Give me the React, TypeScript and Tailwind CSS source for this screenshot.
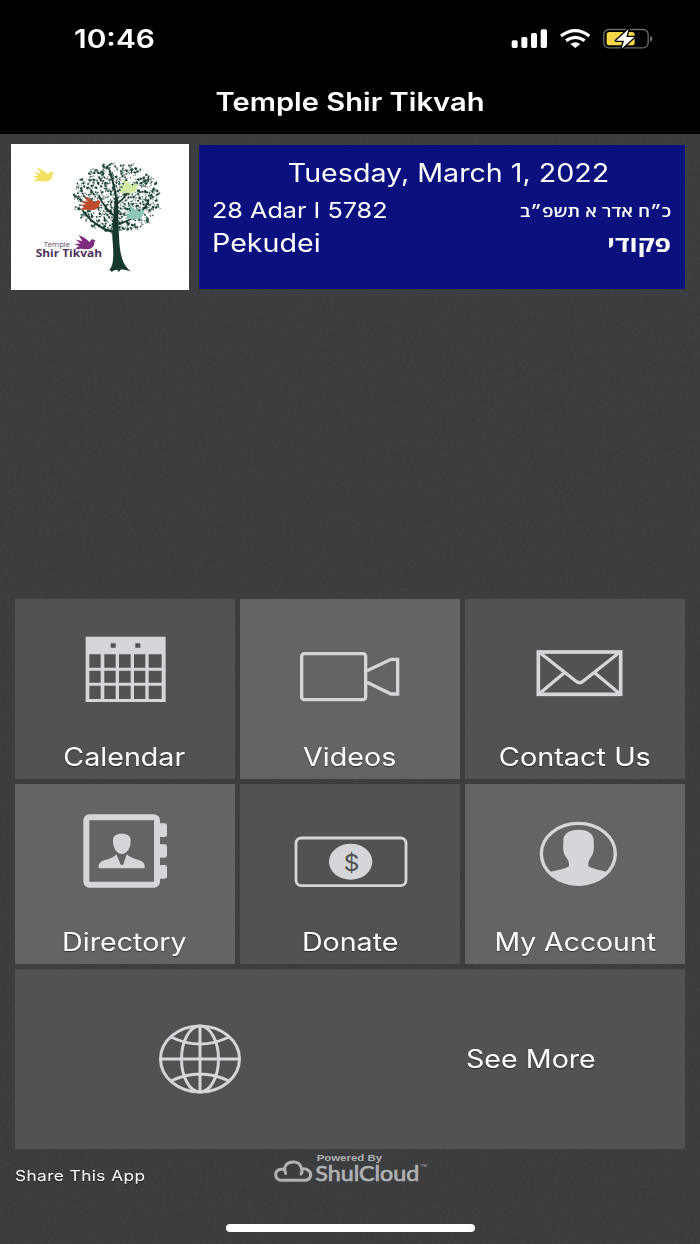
import type { ReactNode } from 'react'

const FG = '#d5d6da'

type TileProps = {
    label: string
    viewBox: string
    light?: boolean
    labelClass: string
    children: ReactNode
}

// Small deterministic generator, keeps the leaves in the same place on every render
function makeLeaves(count: number) {
    let seed = 17
    const next = () => {
        seed = (seed * 16807) % 2147483647
        return seed / 2147483647
    }
    return Array.from({ length: count }, (_, i) => {
        const angle = i * 2.39996 + next() * 0.3
        const dist = Math.sqrt((i + next()) / count)
        return {
            x: 350 + Math.cos(angle) * dist * 130,
            y: 187 + Math.sin(angle) * dist * 105,
            r: 1.2 + next() * 3.4,
            tilt: next() * 180,
            stem: next() > 0.4,
        }
    })
}

const leaves = makeLeaves(440)

function Bird({ x, y, color }: { x: number; y: number; color: string }) {
    return (
        <path
            transform={`translate(${x} ${y})`}
            fill={color}
            d="M13 0L29 8L40 16C44 20 45 22 47 21C48 13 57 11 60 16L64 17L60 22C60 34 50 44 38 43C30 44 22 40 14 43L2 41L15 34L0 27L18 26L4 14L24 19Z"
        />
    )
}

function Logo() {
    return (
        <svg viewBox="33 25 534 440" preserveAspectRatio="none" className="h-[146px] w-[178px] shrink-0 bg-white">
            <g fill="#1d443b" stroke="#1d443b">
                {leaves.map((leaf, i) => (
                    <g key={i} transform={`translate(${leaf.x} ${leaf.y}) rotate(${leaf.tilt})`}>
                        <ellipse rx={leaf.r} ry={leaf.r * 0.8} strokeWidth="0.5" />
                        {leaf.stem && <path d={`M${leaf.r} 0v-9l3 2`} fill="none" strokeWidth="1.3" />}
                    </g>
                ))}
            </g>
            <g fill="none" stroke="#17382f" strokeLinecap="round">
                <path d="M345 292C318 286 278 267 249 227" strokeWidth="6" />
                <path d="M349 248C326 226 307 209 297 180" strokeWidth="5" />
                <path d="M350 235C354 190 340 145 329 105" strokeWidth="6" />
                <path d="M350 207C365 193 378 184 384 168" strokeWidth="5" />
                <path d="M350 268C391 257 431 232 445 198" strokeWidth="5" />
            </g>
            <path fill="#17382f" d="M345 190L354 190C355 235 355 278 358 320C361 366 372 396 394 409C379 405 370 403 363 403L356 411L352 404C346 404 340 406 335 411L332 406L327 405C340 394 342 366 338 320C334 286 341 240 345 190Z" />
            <Bird x={98} y={95} color="#f3df61" />
            <Bird x={239} y={181} color="#bf4a2c" />
            <Bird x={352} y={130} color="#d2e9a2" />
            <Bird x={371} y={209} color="#8cc7ba" />
            <Bird x={223} y={299} color="#7e2d80" />
            <text x="131" y="334" textLength="79" lengthAdjust="spacingAndGlyphs" fontFamily="Open Sans, sans-serif" fontSize="20" fill="#574763">Temple</text>
            <text x="107" y="367" textLength="199" lengthAdjust="spacingAndGlyphs" fontFamily="Open Sans, sans-serif" fontSize="33" fontWeight="700" fill="#4c315c">Shir Tikvah</text>
        </svg>
    )
}

function StatusIcons() {
    return (
        <svg viewBox="60 50 435 70" className="mt-px h-[23.33px] w-[145px]">
            <g fill="#fff">
                <rect x="65" y="90" width="18" height="23" rx="5" />
                <rect x="94" y="80" width="18" height="33" rx="5" />
                <rect x="123" y="68" width="18" height="45" rx="5" />
                <rect x="152" y="57" width="19" height="56" rx="5" />
                <path d="M241 101Q256 91 271 101L256 113Z" />
            </g>
            <g fill="none" stroke="#fff" strokeWidth="10">
                <path d="M213 77Q256 45 298 77" />
                <path d="M228 91Q256 71 284 91" />
            </g>
            <rect x="341.500" y="57.500" width="133" height="55" rx="15" fill="none" stroke="#6b6b6b" strokeWidth="4" />
            <path d="M480 77c10 2 10 15 0 17z" fill="#6b6b6b" />
            <rect x="350" y="65" width="84" height="40" rx="8" fill="#f7d548" />
            <path d="M416 56L378 91H402L395 115L433 80H409Z" fill="#fff" stroke="#000" strokeWidth="8" strokeLinejoin="round" paintOrder="stroke" />
        </svg>
    )
}

function Tile({ label, viewBox, light, labelClass, children }: TileProps) {
    return (
        <button className={`flex h-[180px] flex-col items-center ${light ? 'bg-[#636466]' : 'bg-[#515254]'}`}>
            <svg viewBox={viewBox} className="h-[135px] w-[220px] shrink-0" fill="none" stroke={FG}>
                {children}
            </svg>
            <span className={`mt-px text-[25px]/[44px] whitespace-nowrap text-shadow-[0_1px_1px_rgb(0_0_0/0.5)] ${labelClass}`}>{label}</span>
        </button>
    )
}

export default function App() {
    return (
        <div className="relative flex h-[1244px] w-[700px] flex-col overflow-hidden bg-[#3a3b3d] font-['Inter',sans-serif] text-white">
            <header className="z-10 h-[134px] bg-black">
                <div className="flex h-[76px] items-center justify-between pr-[45px] pl-[74px]">
                    <span className="origin-left scale-x-[1.15] pt-px text-[26px] font-semibold">10:46</span>
                    <StatusIcons />
                </div>
                <h1 className="scale-x-[1.165] text-center text-[25px]/[53px] font-semibold">Temple Shir Tikvah</h1>
            </header>

            {/* Paper grain behind the content */}
            <svg className="absolute inset-0 h-full w-full opacity-[0.04]">
                <filter id="grain">
                    <feTurbulence type="fractalNoise" baseFrequency="0.35" numOctaves="2" />
                    <feColorMatrix type="saturate" values="0" />
                </filter>
                <rect width="100%" height="100%" filter="url(#grain)" />
            </svg>

            <main className="relative flex flex-1 flex-col">
                <section className="flex items-start pt-[9.500px] pl-[11px]">
                    <Logo />
                    <div className="mt-[1.500px] ml-[10px] h-[144px] w-[486px] bg-[#0a117e] pt-2 pr-[14px] pl-[13px]">
                        <p className="ml-[14px] scale-x-[1.145] text-center text-[25px]/[41px]">Tuesday, March 1, 2022</p>
                        <div className="flex h-8 items-center justify-between">
                            <span className="origin-left scale-x-[1.145] text-[22px]">28 Adar I 5782</span>
                            <span dir="rtl" className="origin-right scale-x-[1.18] pt-0.5 font-['Open_Sans','Liberation_Sans',sans-serif] text-[16px] font-semibold">כ״ח אדר א תשפ״ב</span>
                        </div>
                        <div className="flex h-[35px] items-center justify-between">
                            <span className="origin-left scale-x-[1.145] text-[25px]">Pekudei</span>
                            <span dir="rtl" className="origin-right scale-x-[1.18] font-['Open_Sans','Liberation_Sans',sans-serif] text-[22.500px] font-bold">פקודי</span>
                        </div>
                    </div>
                </section>

                <section className="mt-auto mr-[14.500px] ml-[14.500px] grid grid-cols-3 gap-[5px]">
                    <Tile label="Calendar" viewBox="46 26 660 405" labelClass="scale-x-[1.145]">
                        <path
                            fill={FG}
                            stroke="none"
                            fillRule="evenodd"
                            d="M258 139H498V335H258ZM333 159V172H348V159ZM407 159V172H422V159ZM269 192V232H303V192ZM314 192V232H348V192ZM358 192V232H393V192ZM403 192V232H437V192ZM447 192V232H486V192ZM269 241V277H303V241ZM314 241V277H348V241ZM358 241V277H393V241ZM403 241V277H437V241ZM447 241V277H486V241ZM269 286V326H303V286ZM314 286V326H348V286ZM358 286V326H393V286ZM403 286V326H437V286ZM447 286V326H486V286Z"
                        />
                    </Tile>
                    <Tile label="Videos" viewBox="16 25 660 405" light labelClass="scale-x-[1.145]">
                        <rect x="201" y="189" width="192" height="138" rx="8" strokeWidth="10" />
                        <path d="M397 240L469 206H489V310H469L397 275" strokeWidth="10" />
                    </Tile>
                    <Tile label="Contact Us" viewBox="691 25 660 405" labelClass="scale-x-[1.155]">
                        <rect x="911" y="184" width="247" height="127" strokeWidth="11" />
                        <path d="M913 184L1022 270Q1034 282 1047 270L1156 184M913 310L988 247M1156 310L1081 247" strokeWidth="10" />
                    </Tile>
                    <Tile label="Directory" viewBox="46 10 660 405" light labelClass="scale-x-[1.145]">
                        <rect x="260" y="110" width="212" height="202" rx="9" strokeWidth="18" />
                        <g fill={FG} stroke="none">
                            <rect x="474" y="128" width="28" height="41" rx="7" />
                            <rect x="474" y="191" width="28" height="40" rx="7" />
                            <rect x="474" y="253" width="28" height="41" rx="7" />
                            <path d="M340 180C339 166 350 159 366 159C383 159 394 166 393 180L392 194C386 212 377 220 366 220C355 220 347 212 341 194Z" />
                            <path d="M297 263C296 248 302 242 316 238C333 234 342 230 350 221L363 251H371L381 221C390 231 404 234 417 238C431 243 436 248 435 263Z" />
                        </g>
                        <path d="M353 221C360 227 372 227 379 221L370 252H363Z" fill="#636466" stroke="none" />
                    </Tile>
                    <Tile label="Donate" viewBox="16 11 660 405" labelClass="scale-x-[1.145]">
                        <rect x="184" y="173" width="330" height="143" rx="16" strokeWidth="8.500" />
                        <ellipse cx="348" cy="244" rx="65" ry="54" fill={FG} stroke="none" />
                        <text x="327" y="272" textLength="47" lengthAdjust="spacingAndGlyphs" fontSize="68" fill="#515254" stroke="none">$</text>
                    </Tile>
                    <Tile label="My Account" viewBox="691 10 660 405" light labelClass="scale-x-[1.135]">
                        <ellipse cx="1031" cy="219" rx="111" ry="91" strokeWidth="10" />
                        <path
                            fill={FG}
                            stroke="none"
                            d="M946 274C968 268 990 266 1003 256C1004 240 997 235 992 226C987 219 986 212 986 205C984 200 987 196 986 184C983 160 1003 147 1032 147C1060 147 1080 160 1077 184C1077 195 1079 199 1077 207C1077 215 1074 222 1069 229C1064 237 1060 243 1061 257C1075 266 1096 268 1116 274C1092 304 1062 315 1031 315C1000 315 968 303 946 274Z"
                        />
                    </Tile>
                    <button className="col-span-3 flex h-[180px] items-center bg-[#515254] pl-[143px]">
                        <svg viewBox="-42 -35 84 70" className="h-[70px] w-[84px]" fill="none" stroke={FG} strokeWidth="3">
                            <ellipse rx="39.500" ry="33" />
                            <ellipse rx="18.500" ry="33" />
                            <path d="M0-33V33M-39.500 0H39.500M-29-22Q0-8 29-22M-29 22Q0 8 29 22" />
                        </svg>
                        <span className="ml-[224.500px] origin-left scale-x-[1.145] pt-[2px] text-[25px] text-shadow-[0_1px_1px_rgb(0_0_0/0.5)]">See More</span>
                    </button>
                </section>

                <footer className="flex h-[95px] flex-col justify-between">
                    <div className="flex h-[46px] pl-[15px]">
                        <a className="w-[259px] pt-[15px] text-[14.500px]/[23px] text-shadow-[0_1px_1px_rgb(0_0_0/0.6)]">
                            <span className="inline-block origin-left scale-x-[1.19] tracking-[0.35px]">Share This App</span>
                        </a>
                        <svg viewBox="42 12 480 102" className="h-[34px] w-[160px] overflow-visible" fill="#b1b2b4">
                            <path d="M77 85C68 64 81 52 98 51C113 50 123 59 125 72C142 69 154 80 152 92C150 101 143 106 133 106H67C55 106 47 99 47 89C47 77 57 71 70 73M125 72C128 79 126 83 123 87" fill="none" stroke="#b1b2b4" strokeWidth="9" strokeLinecap="round" />
                            <text x="170" y="49" textLength="196" lengthAdjust="spacingAndGlyphs" fontFamily="Liberation Sans, sans-serif" fontSize="28" fontWeight="700">Powered By</text>
                            <text x="166" y="109" textLength="312" lengthAdjust="spacingAndGlyphs" fontFamily="Lato, sans-serif" fontSize="64" stroke="#b1b2b4" strokeWidth="2">ShulCloud</text>
                            <text x="482" y="66" textLength="18" lengthAdjust="spacingAndGlyphs" fontFamily="Liberation Sans, sans-serif" fontSize="13">TM</text>
                        </svg>
                    </div>
                    <div className="mx-auto mb-3 h-2 w-[249px] rounded-full bg-white" />
                </footer>
            </main>
        </div>
    )
}
